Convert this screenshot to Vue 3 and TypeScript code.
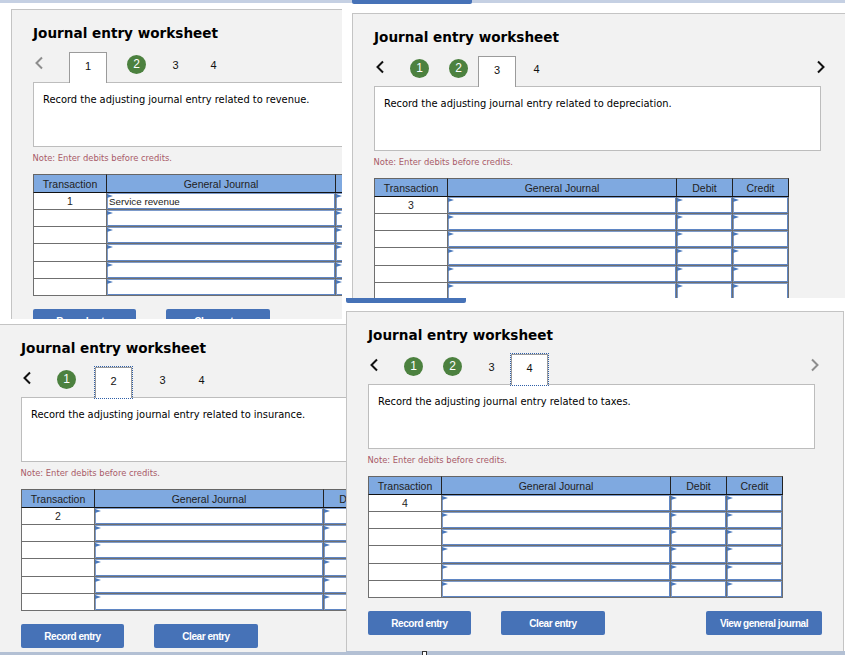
<script setup lang="ts">
interface Step {
  n: number
  state: 'done' | 'plain' | 'active' | 'focus'
  shift?: number
}
interface Sheet {
  id: string
  prompt: string
  txn: number
  first?: string
  backMuted?: boolean
  nextState: 'on' | 'off' | 'none'
  steps: Step[]
  amounts: string[]
  actions: string[]
}

const sheets: Sheet[] = [
  {
    id: 'a',
    prompt: 'Record the adjusting journal entry related to revenue.',
    txn: 1,
    first: 'Service revenue',
    backMuted: true,
    nextState: 'none',
    steps: [
      { n: 1, state: 'active', shift: 10 },
      { n: 2, state: 'done', shift: 9 },
      { n: 3, state: 'plain' },
      { n: 4, state: 'plain', shift: -1 }
    ],
    amounts: ['', ''],
    actions: ['Record entry', 'Clear entry']
  },
  {
    id: 'b',
    prompt: 'Record the adjusting journal entry related to depreciation.',
    txn: 3,
    nextState: 'on',
    steps: [
      { n: 1, state: 'done' },
      { n: 2, state: 'done' },
      { n: 3, state: 'active' },
      { n: 4, state: 'plain' }
    ],
    amounts: ['Debit', 'Credit'],
    actions: []
  },
  {
    id: 'c',
    prompt: 'Record the adjusting journal entry related to insurance.',
    txn: 2,
    nextState: 'none',
    steps: [
      { n: 1, state: 'done' },
      { n: 2, state: 'focus', shift: 9 },
      { n: 3, state: 'plain', shift: 9 },
      { n: 4, state: 'plain' }
    ],
    amounts: ['Debit', ''],
    actions: ['Record entry', 'Clear entry']
  },
  {
    id: 'd',
    prompt: 'Record the adjusting journal entry related to taxes.',
    txn: 4,
    nextState: 'off',
    steps: [
      { n: 1, state: 'done' },
      { n: 2, state: 'done' },
      { n: 3, state: 'plain' },
      { n: 4, state: 'focus' }
    ],
    amounts: ['Debit', 'Credit'],
    actions: ['Record entry', 'Clear entry', 'View general journal']
  }
]

const rows = [0, 1, 2, 3, 4, 5]
</script>

<template>
  <div class="canvas">
    <div class="strip strip-top"></div>
    <div class="tick tick-top"></div>
    <div class="tick tick-mid"></div>
    <div class="strip strip-bottom"></div>
    <div class="handle"></div>

    <div v-for="s in sheets" :key="s.id" class="clip" :class="`clip-${s.id}`">
      <section class="sheet">
        <h2 class="title">Journal entry worksheet</h2>
        <div class="nav">
          <svg class="chev" :class="{ muted: s.backMuted }" width="12" height="14" viewBox="0 0 12 14">
            <path d="M9 1.5 3.5 7 9 12.5" />
          </svg>
          <div class="steps">
            <div
              v-for="st in s.steps"
              :key="st.n"
              class="step"
              :class="st.state"
              :style="{ marginLeft: (st.shift ?? 0) + 'px' }"
            >
              <span v-if="st.state === 'done'" class="dot">{{ st.n }}</span>
              <span v-else>{{ st.n }}</span>
            </div>
          </div>
          <svg
            v-if="s.nextState !== 'none'"
            class="chev next"
            :class="{ muted: s.nextState === 'off' }"
            width="12"
            height="14"
            viewBox="0 0 12 14"
          >
            <path d="M3 1.5 8.5 7 3 12.5" />
          </svg>
        </div>
        <div class="prompt">{{ s.prompt }}</div>
        <p class="note">Note: Enter debits before credits.</p>
        <div class="grid">
          <div class="th">Transaction</div>
          <div class="th">General Journal</div>
          <div v-for="(label, i) in s.amounts" :key="i" class="th">{{ label }}</div>
          <template v-for="r in rows" :key="r">
            <div class="td txn">{{ r === 0 ? s.txn : '' }}</div>
            <div class="td entry"><span v-if="r === 0 && s.first" class="val">{{ s.first }}</span></div>
            <div class="td entry"></div>
            <div class="td entry"></div>
          </template>
        </div>
        <div class="actions">
          <button v-for="a in s.actions" :key="a" class="btn" type="button">{{ a }}</button>
        </div>
      </section>
    </div>
  </div>
</template>

<style scoped>
.canvas {
  position: relative;
  width: 845px;
  height: 655px;
  overflow: hidden;
  background: #fff;
  font-family: "Liberation Sans", Arial, sans-serif;
}
.strip {
  position: absolute;
  left: 0;
  width: 845px;
}
.strip-top {
  top: 0;
  height: 3px;
  background: #c5d0e3;
}
.strip-bottom {
  bottom: 0;
  height: 4px;
  background: #b3c0d4;
}
.tick {
  position: absolute;
  width: 120px;
  height: 4px;
  background: #4672b7;
  border-radius: 0 0 2px 2px;
  z-index: 5;
}
.tick-top {
  left: 352px;
  top: 0;
}
.tick-mid {
  left: 346px;
  top: 298px;
  height: 5px;
}
.handle {
  position: absolute;
  left: 422px;
  top: 651px;
  width: 3px;
  height: 3px;
  border: 1px solid #333;
  border-bottom: 0;
  background: #fff;
  z-index: 5;
}
.clip {
  position: absolute;
  overflow: hidden;
}
.clip-a {
  left: 11px;
  top: 9px;
  width: 331px;
  height: 310px;
}
.clip-b {
  left: 352px;
  top: 13px;
  width: 493px;
  height: 285px;
}
.clip-c {
  left: 0;
  top: 324px;
  width: 346px;
  height: 328px;
}
.clip-d {
  left: 346px;
  top: 311px;
  width: 498px;
  height: 340px;
}
.clip-c .sheet {
  margin-left: -1px;
}
.sheet {
  box-sizing: border-box;
  width: 498px;
  height: 340px;
  padding: 0 21px;
  background: #f2f2f2;
  border: 1px solid #c4c4c4;
  border-bottom: 0;
  color: #000;
}
.title {
  margin: 0;
  padding-top: 14px;
  height: 28px;
  box-sizing: content-box;
  font-family: "DejaVu Sans", Verdana, sans-serif;
  font-size: 13.6px;
  line-height: 18px;
  font-weight: 700;
  white-space: nowrap;
}
.nav {
  position: relative;
  display: flex;
  align-items: flex-start;
  height: 30px;
}
.chev {
  flex: none;
  margin: 4px 0 0 0;
  width: 12px;
}
.chev path {
  fill: none;
  stroke: #111;
  stroke-width: 2;
}
.chev.muted path {
  stroke: #8d8d8d;
}
.chev.next {
  position: absolute;
  left: 441px;
}
.steps {
  display: flex;
  margin-left: 14px;
}
.step {
  box-sizing: border-box;
  width: 39px;
  height: 30px;
  padding-bottom: 5px;
  display: flex;
  align-items: center;
  justify-content: center;
  font-size: 11px;
  color: #111;
}
.step.active,
.step.focus {
  position: relative;
  z-index: 2;
  width: 38px;
  height: 31px;
  margin-right: 1px;
  padding-bottom: 4px;
  background: #fff;
  border: 1px solid #9b9b9b;
  border-bottom: 0;
}
.step.focus {
  width: 37px;
  margin-right: 2px;
  outline: 1px dotted #2f5fa8;
}
.dot {
  width: 19px;
  height: 19px;
  border-radius: 50%;
  background: #4c813f;
  color: #fff;
  font-size: 12px;
  line-height: 19px;
  text-align: center;
}
.prompt {
  box-sizing: border-box;
  width: 447px;
  height: 65px;
  padding: 10px 9px;
  background: #fff;
  border: 1px solid #bdbdbd;
  font-family: "DejaVu Sans", Verdana, sans-serif;
  font-size: 9.9px;
  line-height: 14px;
  white-space: nowrap;
}
.note {
  margin: 0 0 0 -0.5px;
  height: 27px;
  padding-top: 6px;
  box-sizing: border-box;
  font-family: "DejaVu Sans", Verdana, sans-serif;
  font-size: 8.4px;
  line-height: 11px;
  color: #a85a68;
  white-space: nowrap;
}
.grid {
  display: grid;
  grid-template-columns: 73px 229px 56px 57px;
  grid-template-rows: 19px 17px 17px 17px 18px 17px 17px;
  width: 415px;
  height: 122px;
}
.th {
  box-sizing: border-box;
  display: flex;
  align-items: center;
  justify-content: center;
  background: #7fa9e0;
  border-top: 1px solid #666;
  border-left: 1px solid #222;
  border-bottom: 1px solid #111;
  font-size: 10.5px;
  color: #222;
}
.th:first-child {
  border-left-color: #666;
}
.th:nth-child(4) {
  border-right: 1px solid #222;
}
.td {
  box-sizing: border-box;
  background: #fff;
  font-size: 10.5px;
  color: #222;
  border-left: 1px solid #6f6f6f;
  border-bottom: 1px solid #6f6f6f;
}
.txn {
  display: flex;
  align-items: center;
  justify-content: center;
}
.entry {
  position: relative;
  display: flex;
  align-items: center;
  box-shadow: inset 1px 1px 0 #7d9bcb, inset -1px -1px 0 #5f86c4;
}
.entry:nth-child(4n) {
  border-right: 1px solid #6f6f6f;
}
.entry::before {
  content: "";
  position: absolute;
  left: 0;
  top: 1px;
  border-left: 6px solid #4a78bb;
  border-top: 2.5px solid transparent;
  border-bottom: 2.5px solid transparent;
}
.val {
  padding-left: 2px;
  font-size: 9.8px;
  color: #222;
  white-space: nowrap;
}
.actions {
  display: flex;
  padding-top: 13px;
}
.btn {
  flex: none;
  height: 24px;
  width: 103px;
  margin-right: 30px;
  padding: 0;
  border: 0;
  border-radius: 2px;
  background: #4672b7;
  color: #fff;
  font-family: "Liberation Sans", Arial, sans-serif;
  font-size: 10px;
  letter-spacing: -0.45px;
  font-weight: 700;
}
.btn:nth-child(2) {
  width: 104px;
}
.btn:nth-child(3) {
  width: 116px;
  margin: 0 0 0 71px;
}
</style>
